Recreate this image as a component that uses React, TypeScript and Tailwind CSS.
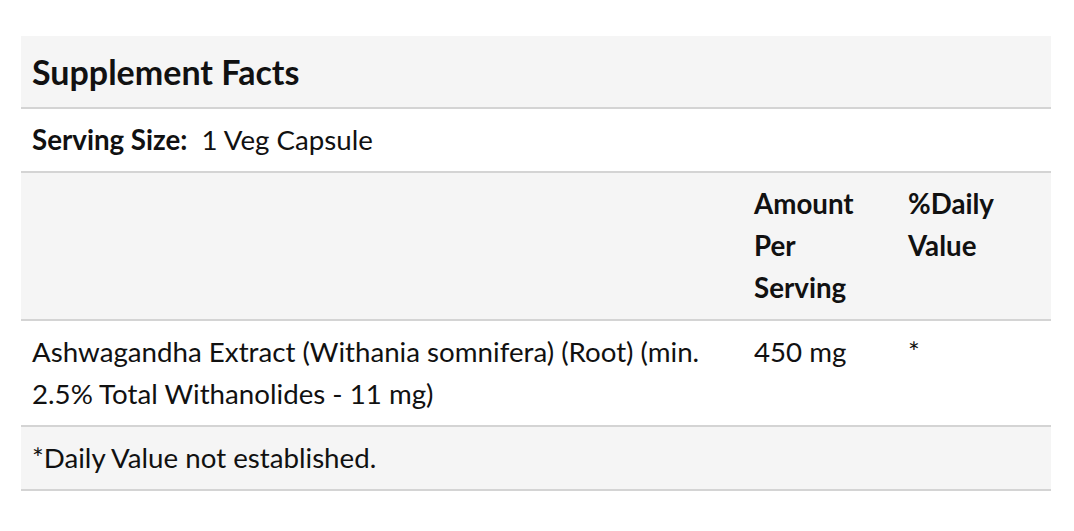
import React from "react";

export default function App() {
  return (
    <div className="w-[1074px] h-[531px] bg-white pt-[36px] pl-[21px]" style={{ fontFamily: "Lato, 'Open Sans', sans-serif" }}>
      <div className="w-[1030px] text-[#111] text-[27.7px] leading-[42px]">
        <div className="bg-[#f5f5f5] border-b-2 border-[#d4d4d4] px-[11px] h-[73px] flex items-center">
          <h2 className="text-[34px] font-bold leading-[51px]">Supplement Facts</h2>
        </div>
        <div className="border-b-2 border-[#d4d4d4] px-[11px] py-[10px]">
          <span className="font-bold">Serving Size:</span>&nbsp; 1 Veg Capsule
        </div>
        <div className="bg-[#f5f5f5] border-b-2 border-[#d4d4d4] grid grid-cols-[722px_154px_154px] py-[10px] font-bold">
          <div className="px-[11px]"></div>
          <div className="px-[11px]">Amount<br />Per<br />Serving</div>
          <div className="px-[11px]">%Daily<br />Value</div>
        </div>
        <div className="border-b-2 border-[#d4d4d4] grid grid-cols-[722px_154px_154px] py-[10px]">
          <div className="px-[11px]">Ashwagandha Extract (Withania somnifera) (Root) (min. 2.5% Total Withanolides - 11 mg)</div>
          <div className="px-[11px]">450 mg</div>
          <div className="px-[11px]">*</div>
        </div>
        <div className="bg-[#f5f5f5] border-b-2 border-[#d4d4d4] px-[11px] py-[10px]">
          *Daily Value not established.
        </div>
      </div>
    </div>
  );
}
